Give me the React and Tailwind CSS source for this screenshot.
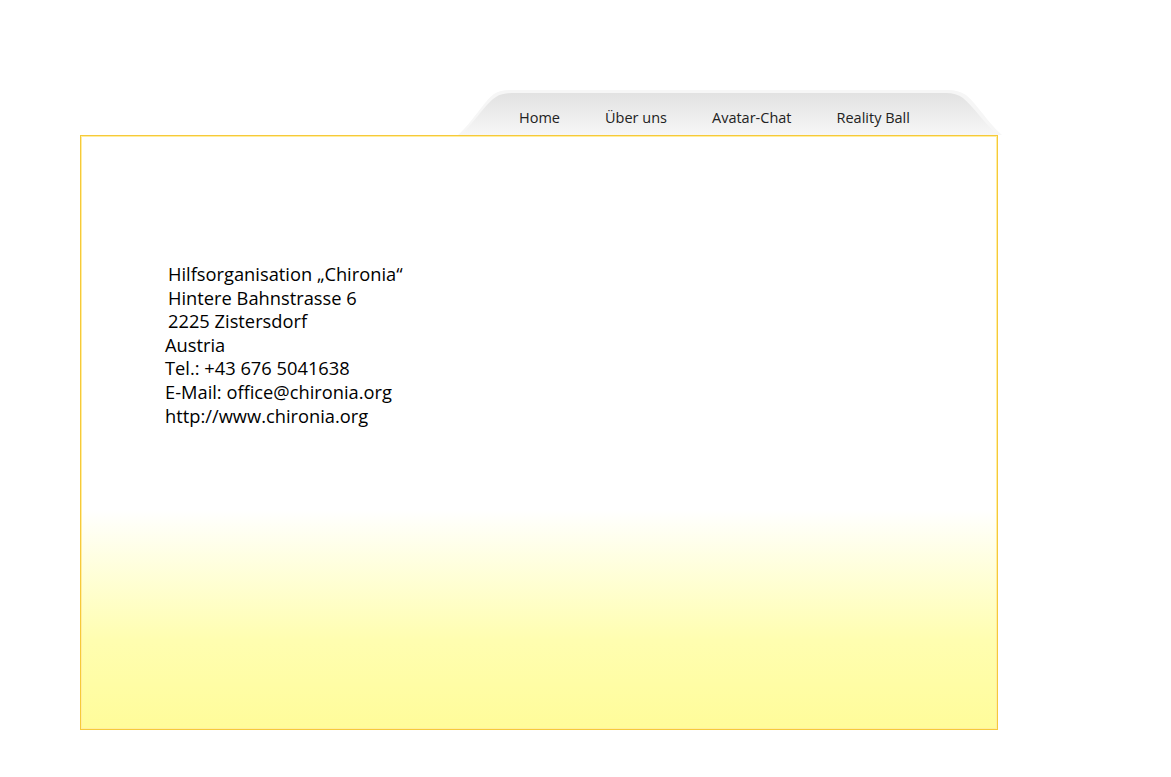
const links = ['Home', 'Über uns', 'Avatar-Chat', 'Reality Ball']

const address = [
  { text: 'Hilfsorganisation „Chironia“', indent: true },
  { text: 'Hintere Bahnstrasse 6', indent: true },
  { text: '2225 Zistersdorf', indent: true },
  { text: 'Austria' },
  { text: 'Tel.: +43 676 5041638' },
  { text: 'E-Mail: office@chironia.org' },
  { text: 'http://www.chironia.org' },
]

function TabShape() {
  return (
    <svg className="absolute inset-0" width="544" height="46" viewBox="0 0 544 46">
      <defs>
        <linearGradient id="tabfill" x1="0" y1="0" x2="0" y2="1">
          <stop offset="0" stopColor="#e2e2e2" />
          <stop offset="1" stopColor="#f7f7f7" />
        </linearGradient>
      </defs>
      <path
        d="M0 46 C 14 34, 26 12, 36 5 Q 42 1, 52 1 L 490 1 Q 500 1, 508 6 C 520 16, 530 34, 544 46 Z"
        fill="#f6f6f6"
      />
      <path
        d="M3 46 C 16 34, 28 14, 38 8 Q 44 4, 54 4 L 488 4 Q 498 4, 505 9 C 516 18, 526 34, 540 46 Z"
        fill="url(#tabfill)"
      />
    </svg>
  )
}

export default function App() {
  return (
    <div className="min-h-screen bg-white pt-[89px] pl-[80px]" style={{ fontFamily: '"Open Sans", Lato, sans-serif' }}>
      <div className="w-[918px]">
        {/* Tab */}
        <div className="flex justify-end">
          <div className="relative w-[544px] h-[46px] mr-[-4px]">
            <TabShape />
            <nav className="relative flex gap-[45px] pl-[61px] pt-[22px] text-[14.5px] text-[#222]">
              {links.map((l) => (
                <a key={l} href="#" className="leading-none">
                  {l}
                </a>
              ))}
            </nav>
          </div>
        </div>

        {/* Panel */}
        <div className="h-[595px] border border-[#f6c93a] bg-[linear-gradient(to_bottom,#ffffff_0%,#ffffff_63%,#fffeb0_85%,#fffc9a_100%)] shadow-[0_0_0_1px_#ffeea0_inset]">
          <div className="pt-[126px] pl-[84px] text-[18.3px] leading-[23.6px] text-black">
            {address.map((a) => (
              <div key={a.text} className={a.indent ? 'pl-[3px]' : ''}>
                {a.text}
              </div>
            ))}
          </div>
        </div>
      </div>
    </div>
  )
}
